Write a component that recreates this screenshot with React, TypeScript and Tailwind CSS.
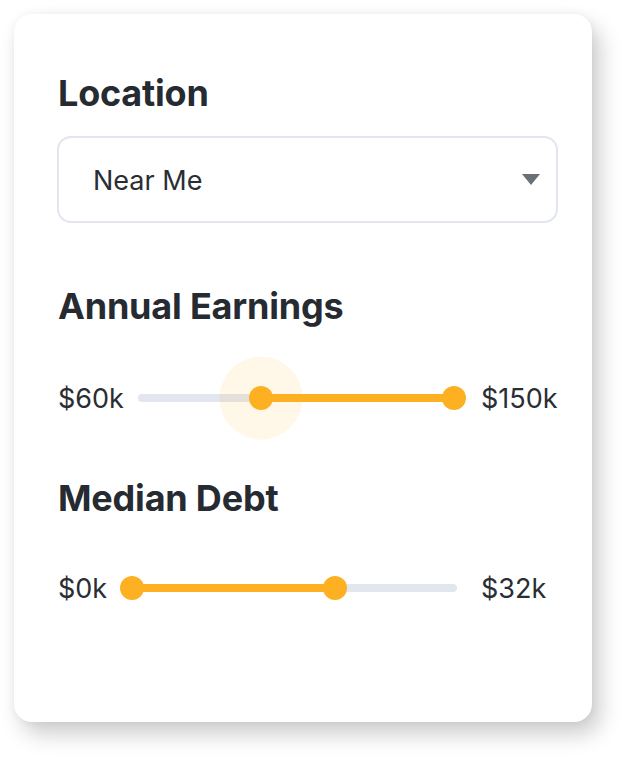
import React from "react";

function Slider({
  left,
  right,
  lo,
  hi,
  halo,
  ml,
  mr,
}: {
  left: string;
  right: string;
  lo: number;
  hi: number;
  halo?: boolean;
  ml: string;
  mr: string;
}) {
  const loPct = `${lo}%`;
  const hiPct = `${hi}%`;
  return (
    <div className="flex items-center h-[48px]">
      <span className="text-[27px] leading-none text-[#2a2d34]">{left}</span>
      <div className={`relative flex-1 h-[8px] rounded-full bg-[#e1e6ef] ${ml} ${mr}`}>
        <div className="absolute top-0 h-[8px] bg-[#FDB022]" style={{ left: loPct, right: `${100 - hi}%` }} />
        {halo && (
          <div
            className="absolute top-1/2 w-[83px] h-[83px] -translate-x-1/2 -translate-y-1/2 rounded-full bg-[rgba(253,176,34,0.1)]"
            style={{ left: loPct }}
          />
        )}
        <div
          className="absolute top-1/2 w-[24px] h-[24px] -translate-x-1/2 -translate-y-1/2 rounded-full bg-[#FDB022]"
          style={{ left: loPct }}
        />
        <div
          className="absolute top-1/2 w-[24px] h-[24px] -translate-x-1/2 -translate-y-1/2 rounded-full bg-[#FDB022]"
          style={{ left: hiPct }}
        />
      </div>
      <span className="w-[79px] text-[27px] leading-none text-[#2a2d34]">{right}</span>
    </div>
  );
}

export default function App() {
  return (
    <div className="w-[626px] h-[758px] bg-white pt-[14px] pl-[14px] font-['Inter',sans-serif]">
      <div className="w-[578px] h-[708px] bg-white rounded-[18px] shadow-[0_0_10px_rgba(0,0,0,0.05),8px_12px_22px_rgba(0,0,0,0.2)] pl-[44px] pr-[32px] pt-[59px] flex flex-col">
        <h2 className="text-[36px] leading-[40px] font-bold text-[#262a31] tracking-[-0.2px]">Location</h2>
        <div className="mt-[23px] -ml-[1px] w-[501px] h-[87px] border-2 border-[#e1e6ef] rounded-[14px] flex items-center justify-between pl-[34px] pr-[16px]">
          <span className="pt-[3px] text-[27px] text-[#2a2d34]">Near Me</span>
          <svg width="18" height="11" viewBox="0 0 18 11">
            <polygon points="0,0 18,0 9,11" fill="#6b6f78" />
          </svg>
        </div>
        <h2 className="mt-[63px] text-[36px] leading-[40px] font-bold text-[#262a31] tracking-[-0.2px]">
          Annual Earnings
        </h2>
        <div className="mt-[48px]">
          <Slider left="$60k" right="$150k" lo={38.7} hi={99.7} halo ml="ml-[14px]" mr="mr-[26px]" />
        </div>
        <h2 className="mt-[56px] text-[36px] leading-[40px] font-bold text-[#262a31] tracking-[-0.2px]">
          Median Debt
        </h2>
        <div className="mt-[46px]">
          <Slider left="$0k" right="$32k" lo={2.1} hi={63.2} ml="ml-[18px]" mr="mr-[24px]" />
        </div>
      </div>
    </div>
  );
}
